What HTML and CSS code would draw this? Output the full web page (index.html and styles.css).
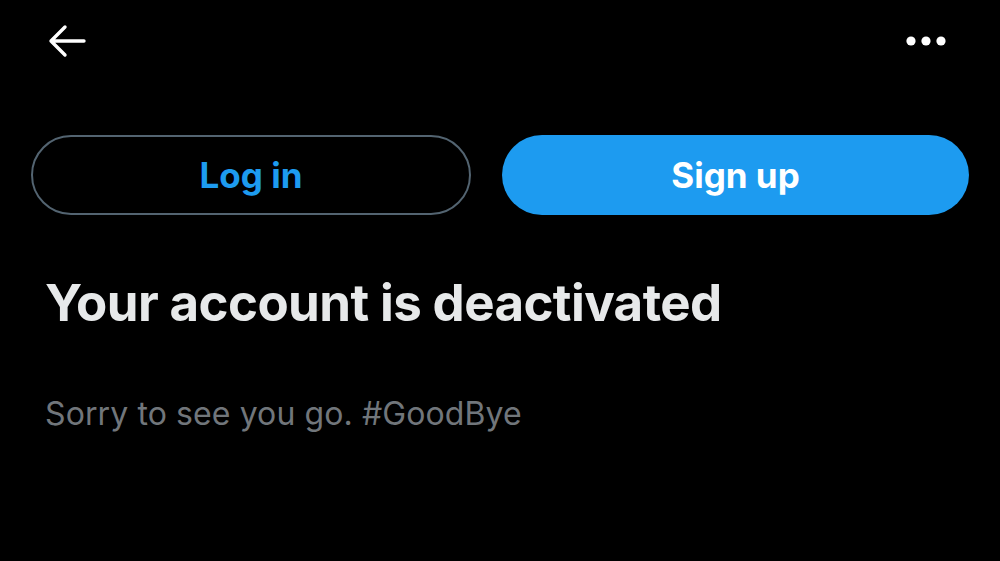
FILE: index.html
```html
<!DOCTYPE html>
<html>
<head>
<meta charset="utf-8">
<link rel="stylesheet" href="styles.css">
</head>
<body>
<div class="page">
  <header class="topbar">
    <svg class="back" width="40" height="34" viewBox="0 0 40 34" aria-hidden="true">
      <path d="M37 17H4M18 3L4 17l14 14" fill="none" stroke="#fff" stroke-width="3.4" stroke-linecap="round" stroke-linejoin="round"/>
    </svg>
    <svg class="more" width="40" height="12" viewBox="0 0 40 12" aria-hidden="true">
      <circle cx="5" cy="6" r="4.6" fill="#fff"/>
      <circle cx="20" cy="6" r="4.6" fill="#fff"/>
      <circle cx="35" cy="6" r="4.6" fill="#fff"/>
    </svg>
  </header>
  <div class="actions">
    <button class="btn btn-outline">Log in</button>
    <button class="btn btn-fill">Sign up</button>
  </div>
  <h1 class="title">Your account is deactivated</h1>
  <p class="sub">Sorry to see you go. #GoodBye</p>
</div>
</body>
</html>
```

FILE: styles.css
```css
html, body {
  margin: 0;
  padding: 0;
  background: #000;
}
body {
  width: 1000px;
  height: 561px;
  overflow: hidden;
  font-family: Inter, "Liberation Sans", sans-serif;
}
.page {
  padding: 0 31px;
}
.topbar {
  display: flex;
  justify-content: space-between;
  align-items: center;
  height: 82px;
  padding: 0 23px 0 16px;
}
.back {
  display: block;
}
.more {
  display: block;
}
.actions {
  display: grid;
  grid-template-columns: 440fr 467fr;
  gap: 31px;
  margin-top: 53px;
}
.btn {
  height: 80px;
  border-radius: 40px;
  font-family: Inter, "Liberation Sans", sans-serif;
  font-size: 35px;
  font-weight: 700;
  letter-spacing: 0;
  padding: 0;
  cursor: pointer;
}
.btn-outline {
  background: #000;
  border: 2px solid #536471;
  color: #1d9bf0;
}
.btn-fill {
  background: #1d9bf0;
  border: none;
  color: #fff;
}
.title {
  margin: 58px 0 0 14px;
  font-size: 51px;
  font-weight: 700;
  color: #e7e9ea;
  letter-spacing: -0.6px;
  line-height: 60px;
}
.sub {
  margin: 62px 0 0 14px;
  font-size: 32px;
  font-weight: 400;
  color: #71767b;
  letter-spacing: 0.1px;
  line-height: 38px;
}
```
